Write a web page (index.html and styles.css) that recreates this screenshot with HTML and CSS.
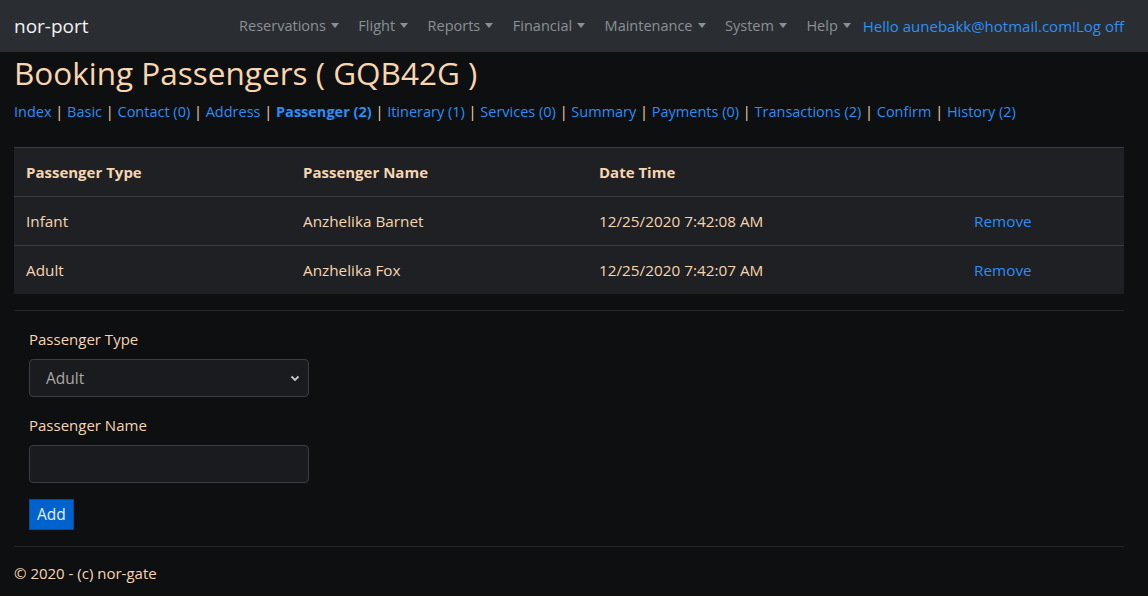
FILE: index.html
```html
<!DOCTYPE html>
<html>
<head>
<meta charset="utf-8">
<link rel="stylesheet" href="styles.css">
</head>
<body>
<header class="navbar">
  <a class="brand" href="#">nor-port</a>
  <nav class="menu">
    <span class="item">Reservations<i class="caret"></i></span>
    <span class="item">Flight<i class="caret"></i></span>
    <span class="item">Reports<i class="caret"></i></span>
    <span class="item">Financial<i class="caret"></i></span>
    <span class="item">Maintenance<i class="caret"></i></span>
    <span class="item">System<i class="caret"></i></span>
    <span class="item">Help<i class="caret"></i></span>
    <span class="user"><a href="#">Hello aunebakk@hotmail.com!</a><a href="#">Log off</a></span>
  </nav>
</header>
<main class="container">
  <h2 class="title">Booking Passengers ( GQB42G )</h2>
  <div class="tabs">
    <a href="#">Index</a> | <a href="#">Basic</a> | <a href="#">Contact (0)</a> | <a href="#">Address</a> | <a href="#" class="active">Passenger (2)</a> | <a href="#">Itinerary (1)</a> | <a href="#">Services (0)</a> | <a href="#">Summary</a> | <a href="#">Payments (0)</a> | <a href="#">Transactions (2)</a> | <a href="#">Confirm</a> | <a href="#">History (2)</a>
  </div>
  <table class="grid">
    <thead>
      <tr><th class="c1">Passenger Type</th><th class="c2">Passenger Name</th><th class="c3">Date Time</th><th class="c4"></th></tr>
    </thead>
    <tbody>
      <tr><td>Infant</td><td>Anzhelika Barnet</td><td>12/25/2020 7:42:08 AM</td><td><a href="#">Remove</a></td></tr>
      <tr><td>Adult</td><td>Anzhelika Fox</td><td>12/25/2020 7:42:07 AM</td><td><a href="#">Remove</a></td></tr>
    </tbody>
  </table>
  <hr class="rule first">
  <form class="form">
    <div class="group">
      <label>Passenger Type</label>
      <div class="select"><span>Adult</span><svg width="10" height="8" viewBox="0 0 10 8"><path d="M1.5 2.5 L5 6 L8.5 2.5" fill="none" stroke="#c9c9c9" stroke-width="1.8"/></svg></div>
    </div>
    <div class="group">
      <label>Passenger Name</label>
      <div class="input"></div>
    </div>
    <button type="button" class="btn">Add</button>
  </form>
  <hr class="rule">
  <footer class="footer">© 2020 - (c) nor-gate</footer>
</main>
</body>
</html>
```
FILE: styles.css
```css
html, body { margin: 0; padding: 0; }
body {
  background: #0d0f11;
  color: #f6d5b1;
  font-family: "Open Sans", "Noto Sans", sans-serif;
  font-size: 15px;
  line-height: 1.5;
}
a { color: #2b8ef5; text-decoration: none; }
.navbar {
  height: 52px;
  background: #2a2e32;
  display: flex;
  align-items: center;
  padding: 0 24px 0 14px;
}
.brand { color: #f2f2f2; font-size: 19px; }
.menu { margin-left: auto; display: flex; align-items: center; }
.item { color: #8b9095; font-size: 14.5px; margin-left: 19.5px; display: flex; align-items: center; }
.item:first-child { margin-left: 0; }
.caret {
  display: inline-block; width: 0; height: 0; margin-left: 5px;
  border-left: 4.5px solid transparent; border-right: 4.5px solid transparent;
  border-top: 5px solid #8b9095; margin-top: -2px;
}
.user { margin-left: 12px; font-size: 15px; }
.container { padding: 0 24px 0 14px; }
.title { font-size: 31.5px; font-weight: 400; margin: 1px 0 0; line-height: 1.3; color: #f8d6af; }
.tabs { margin-top: 7px; color: #f6d5b1; font-size: 14.5px; }
.tabs .active { font-weight: 700; }
.grid { width: 100%; border-collapse: collapse; margin-top: 24px; background: #1f2023; }
.grid th, .grid td { text-align: left; padding: 1px 12px 0; height: 47px; border-top: 1px solid #3a3b3e; font-size: 15.3px; }
.grid th { font-weight: 700; font-size: 15px; }
.c1 { width: 253px; }
.c2 { width: 272px; }
.c3 { width: 351px; }
.rule { border: 0; border-top: 1px solid #24262a; margin: 16px 0 0; }
.form { padding: 17px 15px 0; }
.group { margin-bottom: 17px; }
.group label { display: block; margin-bottom: 9px; }
.group + .group label { margin-bottom: 8px; }
.select, .input {
  width: 280px; height: 38px; box-sizing: border-box;
  background: #1a1b1e; border: 1px solid #3b3d41; border-radius: 4px;
  display: flex; align-items: center; justify-content: space-between;
  padding: 0 8px 0 16px; color: #a8a8a8; font-size: 15.5px;
}
.group + .group { margin-bottom: 16px; }
.btn {
  background: #0062cc; color: #e8eef8; border: 1px solid #0a4a93;
  font-family: inherit; font-size: 15.5px; padding: 3px 7px; line-height: 1.5; border-radius: 0;
  display: block;
}
.footer { padding-top: 15px; font-size: 15px; }
```
